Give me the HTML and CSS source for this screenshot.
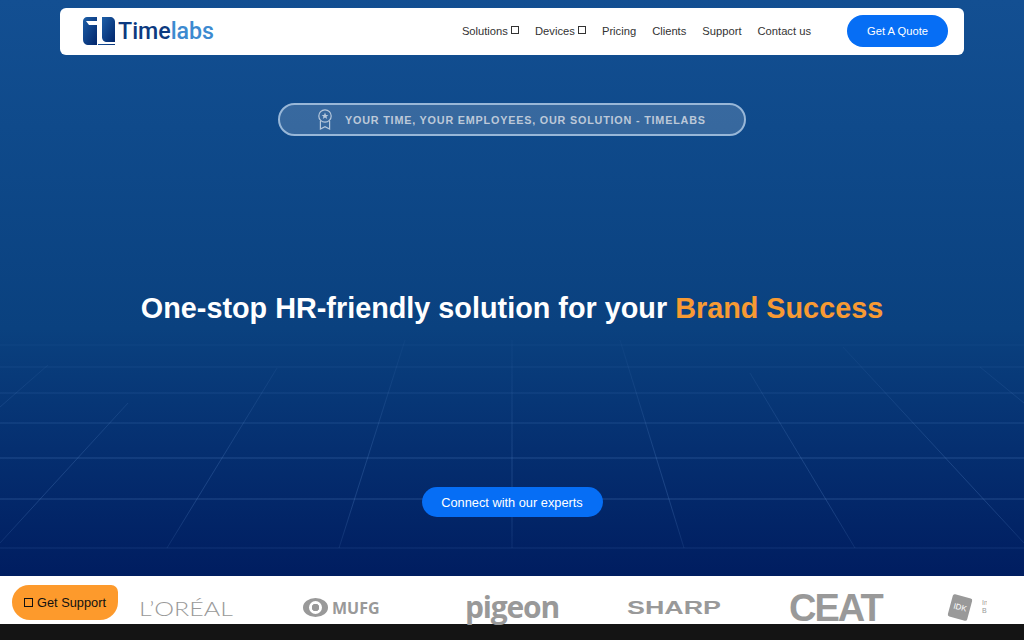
FILE: index.html
```html
<!DOCTYPE html>
<html lang="en">
<head>
<meta charset="utf-8">
<title>Timelabs</title>
<link rel="stylesheet" href="styles.css">
</head>
<body>
<section class="hero">
  <svg class="grid" viewBox="0 0 1024 576" aria-hidden="true">
    <defs>
      <linearGradient id="fade" gradientUnits="userSpaceOnUse" x1="0" y1="320" x2="0" y2="548">
        <stop offset="0" stop-color="#5f8fd0" stop-opacity="0.02"/>
        <stop offset=".6" stop-color="#5f8fd0" stop-opacity=".3"/>
        <stop offset=".8" stop-color="#5f8fd0" stop-opacity=".32"/>
        <stop offset="1" stop-color="#5f8fd0" stop-opacity=".16"/>
      </linearGradient>
    </defs>
    <g class="grid-lines">
      <path d="M0 345H1024M0 367H1024M0 393H1024M0 423H1024M0 458H1024M0 499H1024M0 548H1024"/>
      <path class="grid-diagonals" d="M512 548V340M339 548L405 340M684 548L620 340M167 548L277 368M855 548L750 373M0 543L128 403M1024 543L843 347M0 407L48 365M1024 403L980 367"/>
    </g>
  </svg>
  <nav class="nav">
    <a class="brand">
      <svg class="brand-mark" viewBox="0 0 32 28" aria-hidden="true">
        <defs>
          <linearGradient id="mark" x1="0" y1="0" x2="1" y2="1">
            <stop offset="0" stop-color="#1d5fa8"/>
            <stop offset="1" stop-color="#02266b"/>
          </linearGradient>
        </defs>
        <path fill="url(#mark)" d="M4 0H14V28H6C2 28 0 26 0 22V4C0 2 2 0 4 0Z"/>
        <path fill="url(#mark)" d="M19 0H27C30 0 32 2 32 5V25H24C21 25 19 23 19 20Z"/>
        <path fill="#fff" d="M3 4H14V8H6Z"/>
        <path fill="url(#mark)" d="M15 27H32V28H15Z"/>
      </svg>
      <span class="brand-name"><span class="brand-dark">Time</span><span class="brand-light">labs</span></span>
    </a>
    <ul class="menu">
      <li>Solutions <i class="tofu"></i></li>
      <li>Devices <i class="tofu"></i></li>
      <li>Pricing</li>
      <li>Clients</li>
      <li>Support</li>
      <li>Contact us</li>
    </ul>
    <a class="quote">Get A Quote</a>
  </nav>
  <div class="pill">
    <svg class="pill-icon" viewBox="0 0 16 21" aria-hidden="true">
      <circle cx="8" cy="7" r="6.2"/>
      <path class="star" d="M8 3.6L9 6H11.4L9.5 7.5L10.2 9.9L8 8.5L5.8 9.9L6.5 7.5L4.6 6H7Z"/>
      <path d="M3.4 12V20L8 17.6L12.6 20V12"/>
    </svg>
    <span>YOUR TIME, YOUR EMPLOYEES, OUR SOLUTION - TIMELABS</span>
  </div>
  <h1 class="headline">One-stop HR-friendly solution for your <span class="accent">Brand Success</span></h1>
  <a class="cta">Connect with our experts</a>
</section>
<section class="logos">
  <span class="logo loreal">L’ORÉAL</span>
  <span class="logo mufg"><i class="mufg-mark"></i>MUFG</span>
  <span class="logo pigeon">pigeon</span>
  <span class="logo sharp">SHARP</span>
  <span class="logo ceat">CEAT</span>
  <span class="logo idk"><i class="idk-card">IDK</i><small class="idk-text">In<br>B</small></span>
</section>
<footer class="footer"></footer>
<a class="support"><i class="tofu tofu-dark"></i> Get Support</a>
</body>
</html>
```
FILE: styles.css
```css
* { box-sizing: border-box; }
html, body { margin: 0; height: 640px; overflow: hidden; }
body { font-family: "Liberation Sans", Arial, sans-serif; background: #141414; position: relative; }
ul { list-style: none; margin: 0; padding: 0; }

.hero {
  position: relative;
  height: 576px;
  padding-top: 8px;
  display: flex;
  flex-direction: column;
  align-items: center;
  background: linear-gradient(180deg, #134f92 0%, #0f4a8b 22%, #0a417f 57%, #052f70 78%, #001d60 100%);
}
.grid { position: absolute; inset: 0; width: 1024px; height: 576px; }
.grid-lines path { fill: none; stroke: url(#fade); stroke-width: 1; }
.grid-lines .grid-diagonals { stroke-width: 0.8; }

.nav {
  position: relative;
  width: 904px;
  height: 47px;
  padding: 0 16px 1px 23px;
  display: flex;
  align-items: center;
  background: #fff;
  border-radius: 6px;
}
.brand { display: flex; align-items: center; gap: 3px; }
.brand-mark { width: 32px; height: 28px; display: block; }
.brand-name { font-family: Roboto, sans-serif; font-size: 23.2px; font-weight: 500; line-height: 28px; }
.brand-dark { color: #0c3a80; }
.brand-light { color: #3c8ad0; }

.menu {
  margin-left: auto;
  display: flex;
  gap: 16px;
  font-size: 11.2px;
  color: #333;
  white-space: nowrap;
}
.tofu {
  display: inline-block;
  width: 8px;
  height: 8px;
  border: 1px solid #333;
  vertical-align: 1px;
}
.tofu-dark { width: 9px; height: 9px; border-color: #111; vertical-align: -0.5px; }
.quote {
  margin-left: 36px;
  width: 101px;
  height: 32px;
  display: flex;
  align-items: center;
  justify-content: center;
  background: #066ef5;
  color: #fff;
  font-size: 11.2px;
  border-radius: 16px;
}

.pill {
  position: relative;
  margin-top: 48px;
  width: 468px;
  height: 33px;
  display: flex;
  align-items: center;
  gap: 12px;
  padding-left: 37px;
  border: 2px solid #98b7d8;
  border-radius: 17px;
  background: rgba(255, 255, 255, 0.17);
  color: #bdc9d9;
  font-size: 10.8px;
  font-weight: 700;
  letter-spacing: 0.8px;
  white-space: nowrap;
}
.pill-icon { width: 16px; height: 21px; fill: none; stroke: #b6c8dc; stroke-width: 1.2; }
.pill-icon .star { fill: #b6c8dc; stroke: none; }

.headline {
  position: relative;
  margin: 154px 0 0;
  font-size: 28.8px;
  line-height: 36px;
  font-weight: 700;
  color: #fff;
  white-space: nowrap;
}
.accent { color: #f79a33; }

.cta {
  position: relative;
  margin-top: 161px;
  width: 181px;
  height: 30px;
  display: flex;
  align-items: center;
  justify-content: center;
  background: #066ef5;
  color: #fff;
  font-size: 12.8px;
  border-radius: 15px;
}

.logos {
  position: relative;
  z-index: 1;
  height: 48px;
  width: 987px;
  padding-left: 141px;
  display: flex;
  align-items: center;
  gap: 68px;
  background: #fff;
  overflow-x: clip;
  overflow-y: visible;
  box-shadow: 37px 0 0 #fff;
  white-space: nowrap;
  color: #999;
}
.logo { flex: none; display: flex; align-items: center; }
.loreal { width: 94px; margin-left: -2px; margin-right: 2px; font-family: Lato, sans-serif; font-size: 20px; font-weight: 300; line-height: 24px; margin-top: 16px; transform: scaleX(1.25); transform-origin: left; }
.mufg { width: 76px; gap: 4px; font-family: "Open Sans", sans-serif; font-size: 16px; font-weight: 700; margin-top: 15px; }
.mufg-mark { width: 25px; height: 19px; border-radius: 50%; border-style: solid; border-color: #999; border-width: 3px 6px; flex: none; background: radial-gradient(circle, #999 0 3.5px, #fff 4px); }
.pigeon { width: 94px; margin-left: 18px; font-family: "Open Sans", sans-serif; font-size: 30px; font-weight: 700; letter-spacing: -1.2px; line-height: 30px; margin-top: 14px; }
.sharp { width: 94px; font-size: 18px; font-weight: 700; line-height: 20px; margin-top: 15px; transform: scaleX(1.49); transform-origin: left; }
.ceat { width: 93px; font-size: 38px; font-weight: 700; line-height: 30px; letter-spacing: -2px; margin-top: 16px; }
.idk { gap: 5px; margin-top: 14px; }
.idk-card { width: 20px; height: 23px; display: flex; align-items: center; justify-content: center; background: #999; color: #fff; font-size: 8px; font-style: normal; border-radius: 2px; transform: rotate(15deg); }
.idk-text { font-size: 7px; line-height: 8px; margin-left: 7px; }

.footer { height: 16px; background: #141414; }

.support {
  position: absolute;
  z-index: 2;
  left: 12px;
  top: 585px;
  width: 106px;
  height: 35px;
  display: flex;
  align-items: center;
  justify-content: center;
  gap: 4px;
  background: #fd9a2c;
  color: #111;
  font-size: 12.8px;
  border-radius: 17px 7px 18px 18px;
}
```
